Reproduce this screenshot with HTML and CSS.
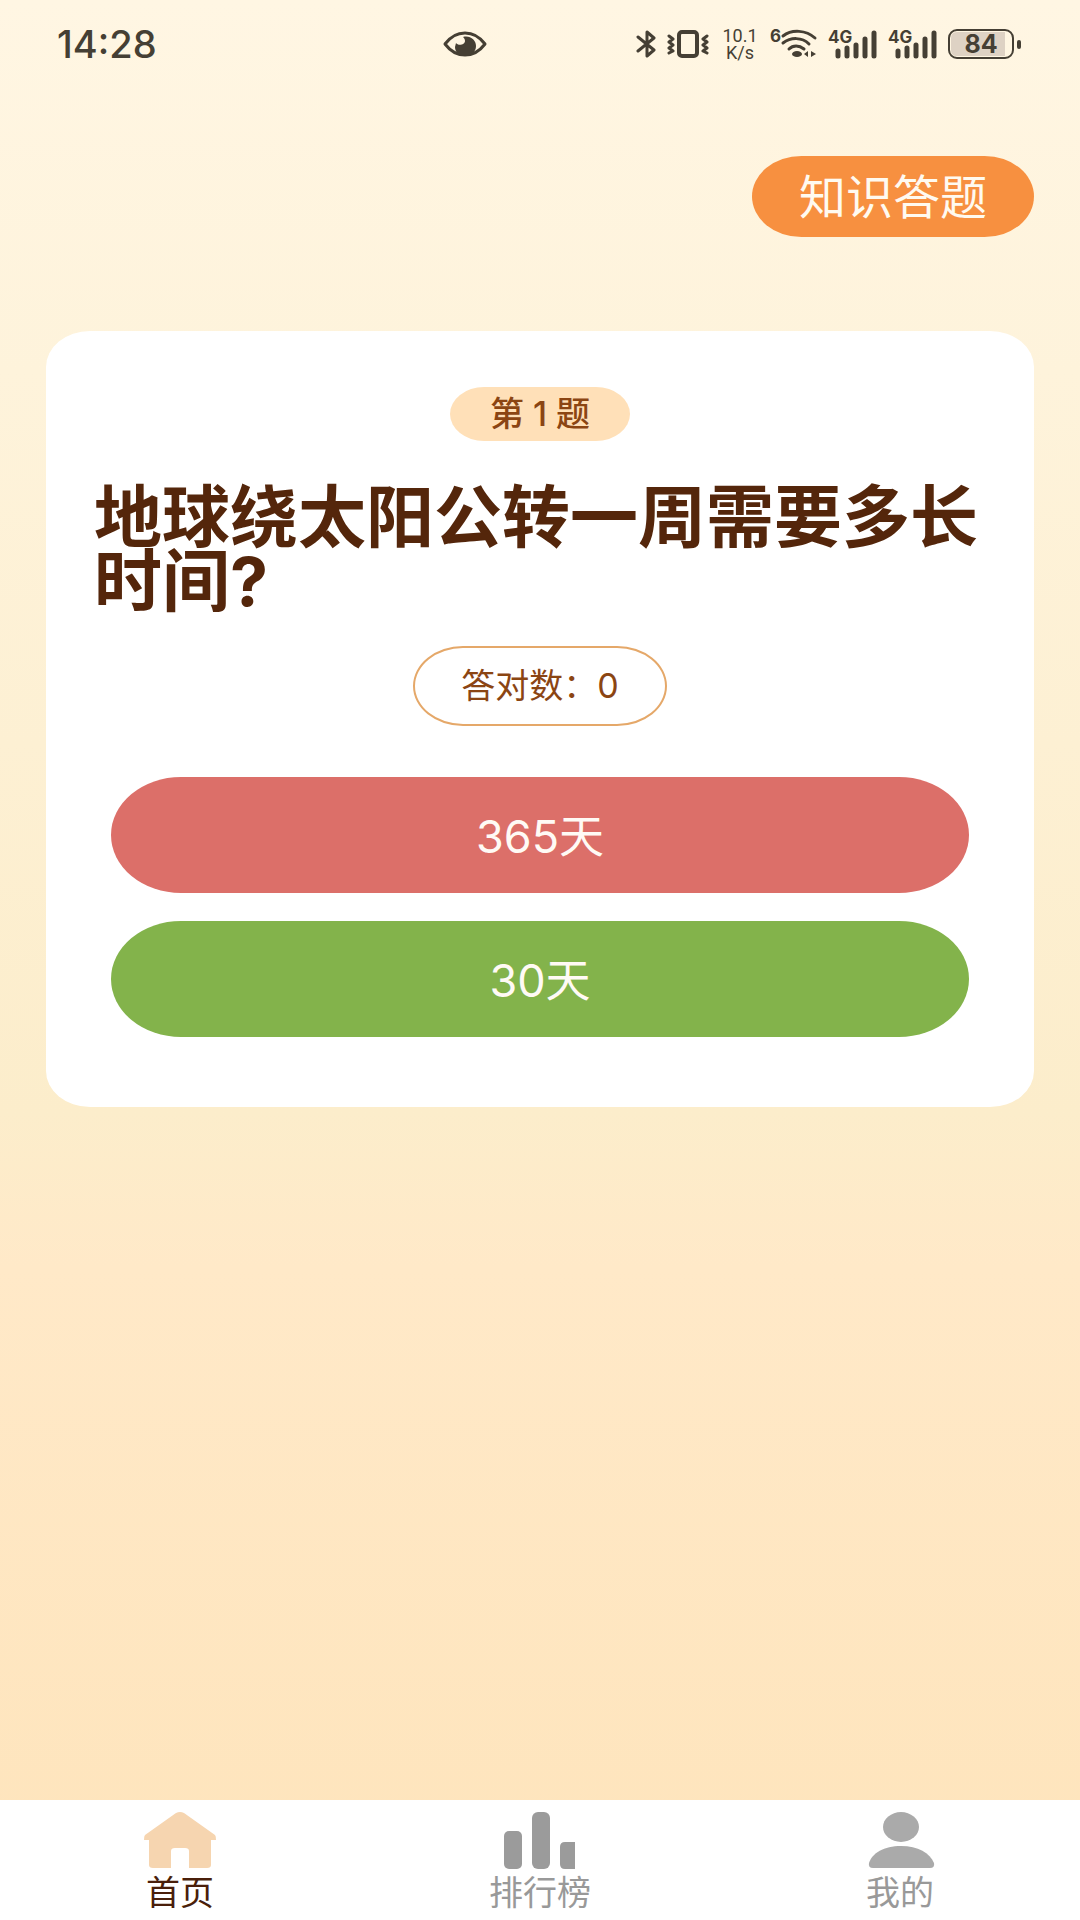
FILE: index.html
```
<!DOCTYPE html>
<html lang="zh-CN">

<head>
    <meta charset="UTF-8">
    <meta name="viewport" content="width=device-width, initial-scale=1.0">
    <title>知识答题</title>
    <link rel="stylesheet" href="styles.css">
</head>

<body>
    <!-- 状态栏 -->
    <div class="status-bar">
        <span class="clock">14:28</span>
        <svg class="eye" width="44" height="26" viewBox="0 0 44 26">
            <path d="M2 13C8 5 15 2 22 2s14 3 20 11c-6 8-13 11-20 11S8 21 2 13z" fill="none" stroke="#453f34" stroke-width="3" stroke-linejoin="round" />
            <path d="M20 6c7-2 13 3 13 9 0 6-5 10-11 10s-10-4-10-9l1-4c2 3 9 2 9-2 0-2-1-3-2-4z" fill="#453f34" />
        </svg>
        <div class="status-icons">
            <svg width="21" height="28" viewBox="0 0 21 28">
                <path d="M2 7l16 13-7 6V2l7 6L2 21" fill="none" stroke="#453f34" stroke-width="3" stroke-linecap="round" stroke-linejoin="round" />
            </svg>
            <svg width="43" height="28" viewBox="0 0 43 28">
                <g fill="none" stroke="#453f34" stroke-linecap="round" stroke-linejoin="round">
                    <rect x="12" y="2" width="18" height="24" rx="3" stroke-width="4" />
                    <path d="M2 6l4 3-4 3 4 3-4 3 4 3-4 2M40 6l-4 3 4 3-4 3 4 3-4 3 4 2" stroke-width="3" />
                </g>
            </svg>
            <div class="net-speed"><span>10.1</span><span>K/s</span></div>
            <svg width="48" height="42" viewBox="0 -6 48 42">
                <text class="wifi-num" x="0" y="13">6</text>
                <g fill="none" stroke="#453f34" stroke-width="3" stroke-linecap="round">
                    <path d="M13 7c9-7 23-6 32 2M13 14c8-6 19-6 26 1M19 20c4-4 10-4 15 0" />
                </g>
                <ellipse cx="27" cy="25" rx="5" ry="3" fill="#453f34" />
                <path d="M38 22v6l-4-3zM41 22v6l5-3z" fill="#453f34" />
            </svg>
            <svg width="50" height="42" viewBox="0 -6 50 42">
                <text class="signal-type" x="0" y="14">4G</text>
                <path d="M10 22v5M19 19v8M28 16v11M37 10v17M46 4v23" stroke="#453f34" stroke-width="5" stroke-linecap="round" />
            </svg>
            <svg width="50" height="42" viewBox="0 -6 50 42">
                <text class="signal-type" x="0" y="14">4G</text>
                <path d="M10 22v5M19 19v8M28 16v11M37 10v17M46 4v23" stroke="#453f34" stroke-width="5" stroke-linecap="round" />
            </svg>
            <svg width="73" height="30" viewBox="0 0 73 30">
                <path d="M9 3h48v24H9q-6 0-6-6V9q0-6 6-6z" fill="#ded2c4" />
                <rect x="1" y="1" width="64" height="28" rx="8" fill="none" stroke="#453f34" stroke-width="2" />
                <rect x="69" y="11" width="4" height="9" rx="2" fill="#453f34" />
                <text class="battery-num" x="33" y="24">84</text>
            </svg>
        </div>
    </div>

    <main class="container">
        <h1 class="page-title">知识答题</h1>

        <!-- 题目卡片 -->
        <section class="quiz-card">
            <div class="quiz-index">第 1 题</div>
            <h2 class="question">地球绕太阳公转一周需要多长时间?</h2>
            <div class="score">答对数：<span id="score">0</span></div>
            <div class="options">
                <button type="button" class="option option-red">365天</button>
                <button type="button" class="option option-green">30天</button>
            </div>
        </section>
    </main>

    <!-- 底部导航 -->
    <nav class="tab-bar">
        <a href="#home" class="tab active">
            <svg width="72" height="57" viewBox="0 0 72 57">
                <path d="M32 1q4-2 8 0l31 22q1 1 1 5h-5v25q0 3-4 3H45V39q0-3-4-3H31q-4 0-4 3v17H9q-4 0-4-3V28H0q0-4 1-5z" fill="#f6d5b0" />
            </svg>
            <span>首页</span>
        </a>
        <a href="#rank" class="tab">
            <svg width="72" height="57" viewBox="0 0 72 57">
                <g fill="#9b9b9b">
                    <rect y="19" width="18" height="38" rx="5" />
                    <rect x="28" width="18" height="57" rx="6" />
                    <path d="M61 30h10v27H61q-5 0-5-5V35q0-5 5-5z" />
                </g>
            </svg>
            <span>排行榜</span>
        </a>
        <a href="#mine" class="tab">
            <svg width="72" height="57" viewBox="0 0 72 57">
                <g fill="#aaa">
                    <ellipse cx="37" cy="15" rx="18" ry="15" />
                    <path d="M5 51c3-10 15-17 32-17s29 7 33 17q1 5-4 5H9q-5 0-4-5z" />
                </g>
            </svg>
            <span>我的</span>
        </a>
    </nav>
</body>

</html>
```

FILE: styles.css
```
/* 主题颜色 */
:root {
    --status-color: #453f34;
    --primary-color: #f79040;
    --text-color: #54260b;
    --accent-color: #8b4513;
}

* {
    box-sizing: border-box;
}

body {
    display: flex;
    flex-direction: column;
    min-height: 100vh;
    margin: 0;
    background: linear-gradient(#fff6e3, #fcedcb 58%, #ffe9c8 66%, #fee4bb);
    font-family: Inter, "Noto Sans CJK SC", sans-serif;
    color: var(--text-color);
}

svg {
    display: block;
}

/* 状态栏 */
.status-bar {
    display: grid;
    grid-template-columns: 40% 1fr auto;
    align-items: center;
    height: 88px;
    padding: 0 59px 0 57px;
    color: var(--status-color);
}

.clock {
    font-size: 38px;
    font-weight: 500;
}

.status-icons {
    display: flex;
    align-items: center;
    gap: 10px;
}

.net-speed {
    display: flex;
    flex-direction: column;
    align-items: center;
    width: 40px;
    font-family: Roboto, sans-serif;
    font-size: 18px;
    line-height: 17px;
}

.wifi-num,
.signal-type {
    font-size: 17px;
    font-weight: 700;
    fill: var(--status-color);
}

.battery-num {
    font-size: 25px;
    font-weight: 700;
    text-anchor: middle;
    fill: var(--status-color);
}

/* 页面内容 */
.container {
    flex: 1;
    display: flex;
    flex-direction: column;
    padding: 68px 46px;
}

.page-title {
    align-self: flex-end;
    margin: 0 0 94px;
    padding: 0 47px;
    border-radius: 50px / 41px;
    background-color: var(--primary-color);
    color: #fffaf0;
    font-size: 47px;
    font-weight: 400;
    line-height: 81px;
}

.quiz-card {
    display: flex;
    flex-direction: column;
    align-items: center;
    padding: 56px 48px 70px;
    border-radius: 44px / 36px;
    background-color: #fff;
}

.quiz-index {
    padding: 0 40px;
    border-radius: 34px / 27px;
    background-color: #ffe0b8;
    color: var(--accent-color);
    font-size: 34px;
    font-weight: 500;
    line-height: 54px;
}

.question {
    align-self: stretch;
    margin: 44px 0 33px;
    font-size: 68px;
    font-weight: 700;
    line-height: 64px;
}

.score {
    padding: 0 46px;
    border: 2px solid #e5a869;
    border-radius: 50px / 40px;
    color: var(--accent-color);
    font-size: 34px;
    line-height: 76px;
}

/* 选项按钮 */
.options {
    align-self: stretch;
    display: flex;
    flex-direction: column;
    gap: 28px;
    margin-top: 51px;
    padding: 0 17px;
}

.option {
    height: 116px;
    padding: 0 0 4px;
    border: none;
    border-radius: 70px / 58px;
    color: #fffaf5;
    font-family: inherit;
    font-size: 45px;
    cursor: pointer;
}

.option-red {
    background-color: #dc6f69;
}

.option-green {
    background-color: #83b34b;
}

/* 底部导航 */
.tab-bar {
    display: flex;
    background-color: #fff;
}

.tab {
    flex: 1;
    display: flex;
    flex-direction: column;
    align-items: center;
    gap: 4px;
    padding: 12px 0 7px;
    color: #999;
    font-size: 34px;
    line-height: 40px;
    text-decoration: none;
}

.tab.active {
    color: #4a1f0a;
}
```
